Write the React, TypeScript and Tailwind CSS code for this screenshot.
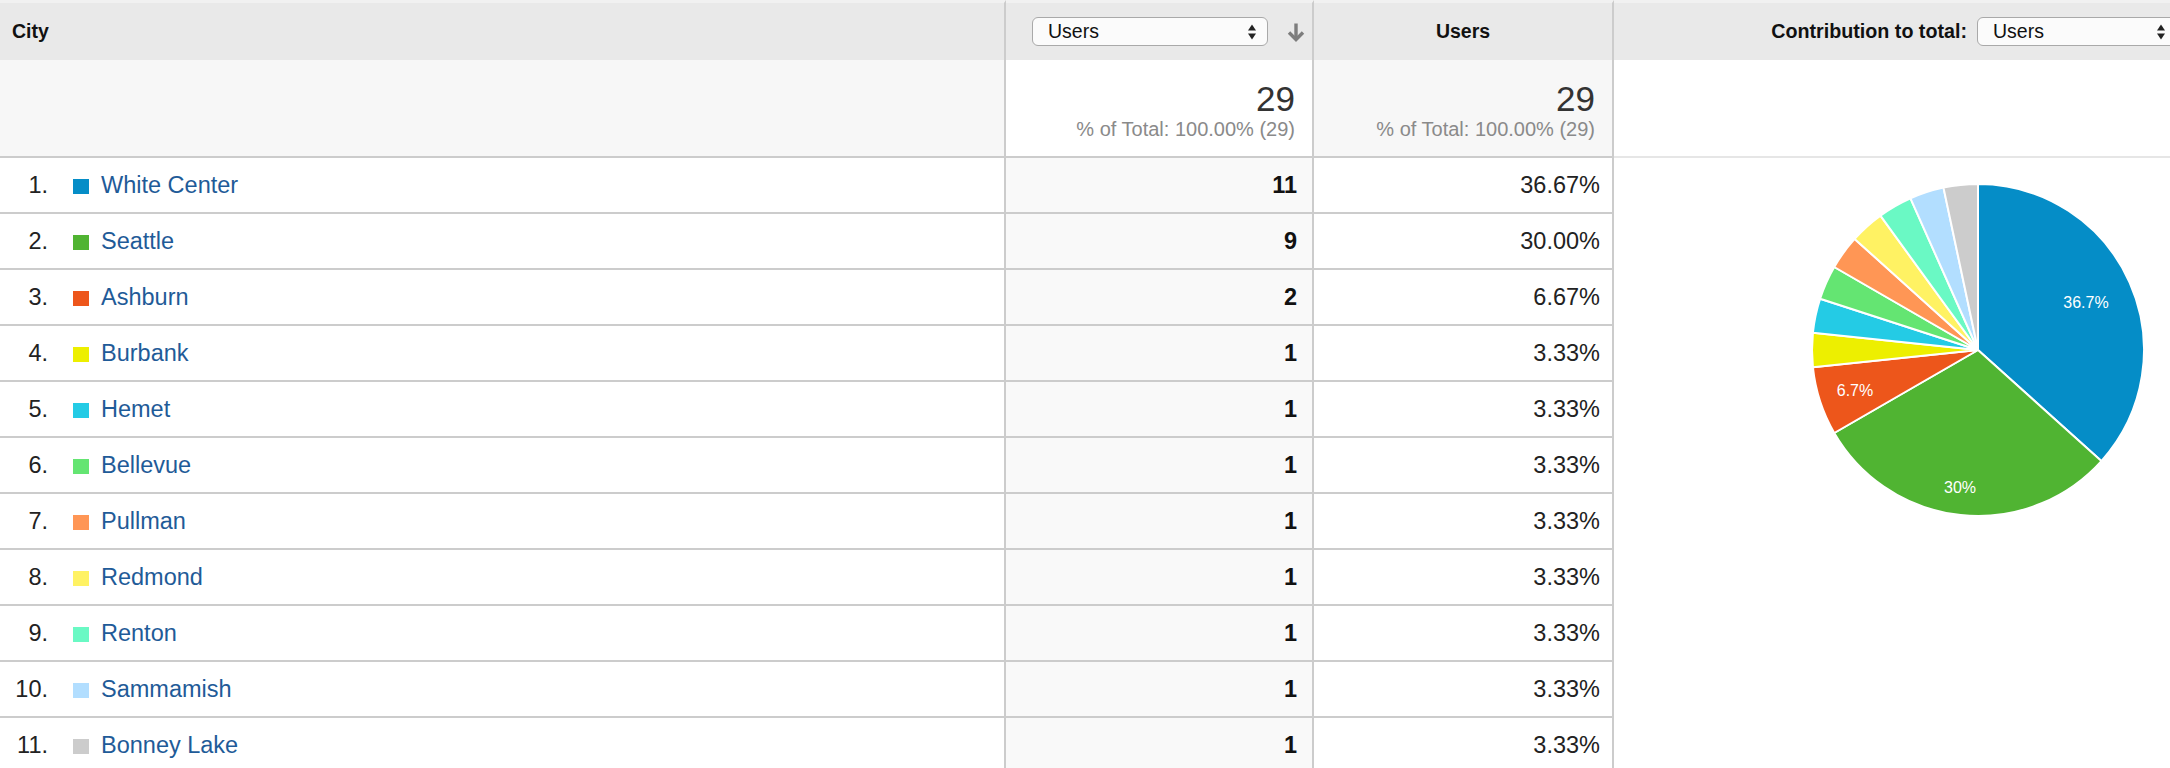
import React from "react";

type Row = { city: string; users: number; pct: string; hex: string; sq: string };

const rows: Row[] = [
  { city: "White Center", users: 11, pct: "36.67%", hex: "#058dc7", sq: "bg-[#058dc7]" },
  { city: "Seattle", users: 9, pct: "30.00%", hex: "#50b432", sq: "bg-[#50b432]" },
  { city: "Ashburn", users: 2, pct: "6.67%", hex: "#ed561b", sq: "bg-[#ed561b]" },
  { city: "Burbank", users: 1, pct: "3.33%", hex: "#edef00", sq: "bg-[#edef00]" },
  { city: "Hemet", users: 1, pct: "3.33%", hex: "#24cbe5", sq: "bg-[#24cbe5]" },
  { city: "Bellevue", users: 1, pct: "3.33%", hex: "#64e572", sq: "bg-[#64e572]" },
  { city: "Pullman", users: 1, pct: "3.33%", hex: "#ff9655", sq: "bg-[#ff9655]" },
  { city: "Redmond", users: 1, pct: "3.33%", hex: "#fff263", sq: "bg-[#fff263]" },
  { city: "Renton", users: 1, pct: "3.33%", hex: "#6af9c4", sq: "bg-[#6af9c4]" },
  { city: "Sammamish", users: 1, pct: "3.33%", hex: "#b2deff", sq: "bg-[#b2deff]" },
  { city: "Bonney Lake", users: 1, pct: "3.33%", hex: "#cccccc", sq: "bg-[#cccccc]" },
];

const total = rows.reduce((s, r) => s + r.users, 0);

// pie slice path, angles in degrees clockwise from 12 o'clock
function slice(cx: number, cy: number, r: number, a0: number, a1: number) {
  const pt = (a: number) => [cx + r * Math.sin((a * Math.PI) / 180), cy - r * Math.cos((a * Math.PI) / 180)];
  const [x0, y0] = pt(a0);
  const [x1, y1] = pt(a1);
  const large = a1 - a0 > 180 ? 1 : 0;
  return `M${cx} ${cy} L${x0} ${y0} A${r} ${r} 0 ${large} 1 ${x1} ${y1} Z`;
}

function UpDown() {
  return (
    <svg width="8" height="16" viewBox="0 0 8 16" className="shrink-0">
      <polygon points="0,6.5 4,0.5 8,6.5" fill="#222" />
      <polygon points="0,9.5 4,15.5 8,9.5" fill="#222" />
    </svg>
  );
}

function SortArrow() {
  return (
    <svg width="20" height="20" viewBox="0 0 20 20" className="shrink-0">
      <path d="M10 1.5 V17" stroke="#7d7d7d" strokeWidth="3.4" fill="none" />
      <path d="M3 10.5 L10 17.5 L17 10.5" stroke="#7d7d7d" strokeWidth="3.4" fill="none" strokeLinejoin="miter" />
    </svg>
  );
}

function Select({ className }: { className: string }) {
  return (
    <div
      className={`flex h-[29px] shrink-0 items-center justify-between rounded-[6px] border-[1.5px] border-[#a9a9a9] bg-[#fbfbfb] pl-[15px] pr-[11px] text-[19.5px] text-[#111] ${className}`}
    >
      <span>Users</span>
      <UpDown />
    </div>
  );
}

function Pie() {
  const cx = 364;
  const cy = 192;
  const r = 166;
  let acc = 0;
  const parts = rows.map((row) => {
    const a0 = (acc / total) * 360;
    acc += row.users;
    const a1 = (acc / total) * 360;
    return { d: slice(cx, cy, r, a0, a1), fill: row.hex, key: row.city };
  });
  return (
    <svg width="556" height="420" viewBox="0 0 556 420" className="block">
      {parts.map((p) => (
        <path key={p.key} d={p.d} fill={p.fill} stroke="#fff" strokeWidth="2" strokeLinejoin="round" />
      ))}
      <g fill="#fff" fontSize="16" fontFamily="'Liberation Sans', Arial, sans-serif" textAnchor="middle">
        <text x="472" y="150">36.7%</text>
        <text x="346" y="335">30%</text>
        <text x="241" y="238">6.7%</text>
      </g>
    </svg>
  );
}

export default function App() {
  const cell = "border-r-2 border-[#cccccc]";
  const head = "h-[60px] bg-[#e9e9e9] border-t-[3px] border-t-[#f1f1f1]";
  return (
    <div className="min-h-screen w-[2170px] overflow-hidden bg-white font-['Liberation_Sans',Arial,sans-serif] text-[#222]">
      <div className="grid grid-cols-[1006px_308px_300px_1fr]">
        {/* header */}
        <div className={`${head} ${cell} flex items-center pl-[12px] text-[19.5px] font-bold text-[#111]`}>City</div>
        <div className={`${head} ${cell} flex items-center pl-[26px]`}>
          <Select className="w-[236px]" />
          <div className="ml-[18px]">
            <SortArrow />
          </div>
        </div>
        <div className={`${head} ${cell} flex items-center justify-center text-[19.5px] font-bold text-[#111]`}>Users</div>
        <div className={`${head} flex items-center justify-end overflow-hidden`}>
          <span className="text-[19.7px] font-bold text-[#111]">Contribution to total:</span>
          <Select className="ml-[10px] -mr-[7px] w-[200px]" />
        </div>

        {/* totals */}
        <div className={`${cell} h-[98px] border-b-2 border-b-[#cccccc] bg-[#f7f7f7]`} />
        <div className={`${cell} flex h-[98px] flex-col items-end border-b-2 border-b-[#cccccc] bg-white pr-[17px] pt-[21px]`}>
          <span className="text-[35px] leading-none text-[#333]">29</span>
          <span className="mt-[2px] text-[20px] leading-[23px] text-[#8a8a8a]">% of Total: 100.00% (29)</span>
        </div>
        <div className={`${cell} flex h-[98px] flex-col items-end border-b-2 border-b-[#cccccc] bg-[#f7f7f7] pr-[17px] pt-[21px]`}>
          <span className="text-[35px] leading-none text-[#333]">29</span>
          <span className="mt-[2px] text-[20px] leading-[23px] text-[#8a8a8a]">% of Total: 100.00% (29)</span>
        </div>
        <div className="h-[98px] border-b-2 border-b-[#e6e6e6] bg-white" />

        {/* data rows */}
        {rows.map((row, i) => (
          <React.Fragment key={row.city}>
            <div className={`${cell} flex h-[56px] items-center border-b-2 border-b-[#cccccc] pt-[2px] text-[23.5px]`}>
              <span className="w-[48px] text-right text-[#222]">{i + 1}.</span>
              <span className={`ml-[25px] h-[15px] w-[16px] shrink-0 ${row.sq}`} />
              <span className="ml-[12px] text-[#1f5b98]">{row.city}</span>
            </div>
            <div className={`${cell} flex h-[56px] items-center justify-end border-b-2 border-b-[#cccccc] bg-[#f9f9f9] pr-[15px] pt-[2px] text-[23.5px] font-bold text-[#111]`}>
              {row.users}
            </div>
            <div className={`${cell} flex h-[56px] items-center justify-end border-b-2 border-b-[#cccccc] pr-[12px] pt-[2px] text-[23.5px]`}>
              {row.pct}
            </div>
            {i === 0 && (
              <div className="row-span-11 bg-white">
                <Pie />
              </div>
            )}
          </React.Fragment>
        ))}
      </div>
    </div>
  );
}
